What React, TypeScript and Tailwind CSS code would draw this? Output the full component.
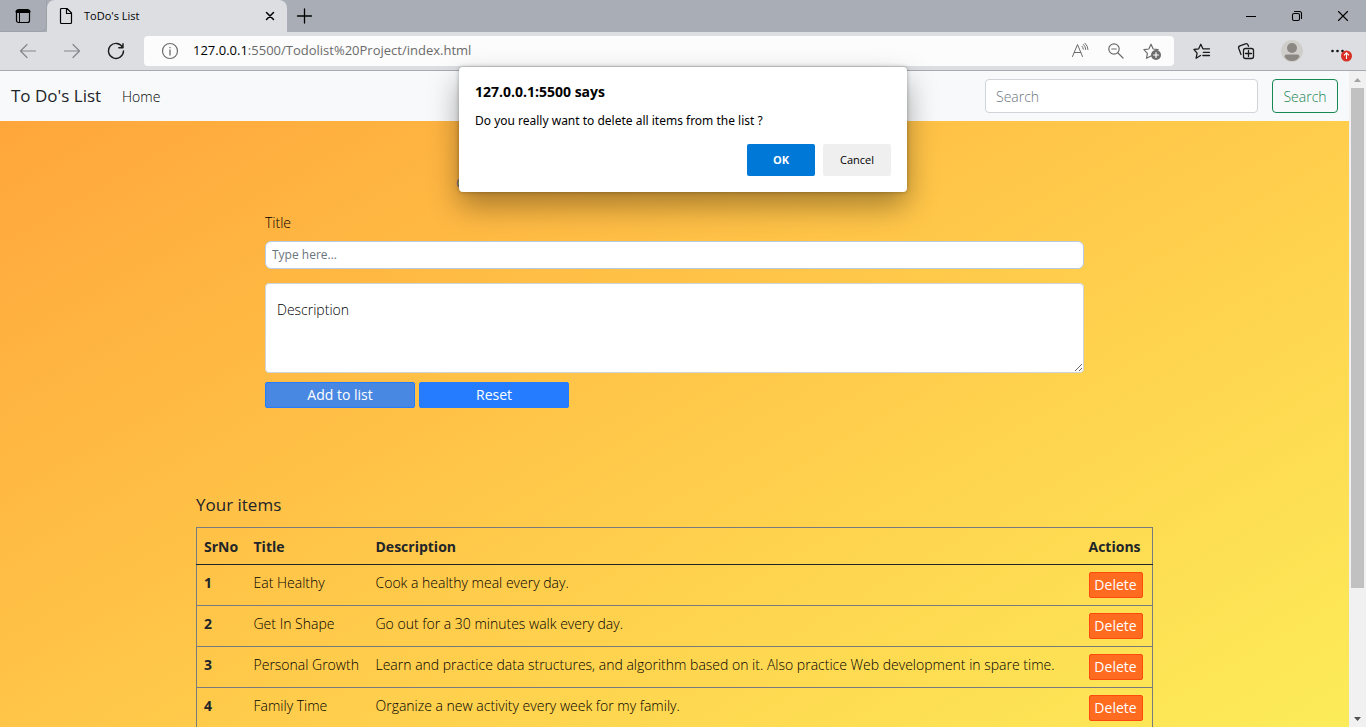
import type { ReactNode } from "react";

const items = [
  { title: "Eat Healthy", description: "Cook a healthy meal every day." },
  { title: "Get In Shape", description: "Go out for a 30 minutes walk every day." },
  {
    title: "Personal Growth",
    description:
      "Learn and practice data structures, and algorithm based on it. Also practice Web development in spare time.",
  },
  { title: "Family Time", description: "Organize a new activity every week for my family." },
];

function Icon({ children, className = "" }: { children: ReactNode; className?: string }) {
  return (
    <svg
      width="18"
      height="18"
      viewBox="0 0 18 18"
      fill="none"
      stroke="currentColor"
      strokeWidth="1.2"
      strokeLinecap="round"
      strokeLinejoin="round"
      aria-hidden="true"
      className={className}
    >
      {children}
    </svg>
  );
}

function IconButton({ label, className = "", children }: { label: string; className?: string; children: ReactNode }) {
  return (
    <button type="button" aria-label={label} className={`flex h-full shrink-0 items-center justify-center ${className}`}>
      {children}
    </button>
  );
}

function TitleBar() {
  return (
    <div className="flex h-8 shrink-0 bg-[#a9aeb6] text-black">
      <IconButton label="Tab actions" className="w-[47px] rounded-br-md border-r border-b border-[#9da2aa]">
        <Icon>
          <rect x="2.5" y="2.5" width="13" height="13" rx="2" />
          <path d="M3 4.5h12" strokeWidth="3" />
          <path d="M5.500 6v9" strokeWidth="1" />
        </Icon>
      </IconButton>
      <div className="flex w-60 items-center rounded-t-lg bg-[#dddee2] pl-[10px]">
        <Icon>
          <path d="M3.500 2.500v13a1 1 0 0 0 1 1h9a1 1 0 0 0 1-1V6L10 1.500H4.500a1 1 0 0 0-1 1zM9.500 1.500v5h5" />
        </Icon>
        <span className="ml-[9px] flex-1 text-[11px]">ToDo's List</span>
        <IconButton label="Close tab" className="w-[34px]">
          <Icon>
            <path d="M5.500 5.500l7 7M12.500 5.500l-7 7" strokeWidth="1.500" />
          </Icon>
        </IconButton>
      </div>
      <IconButton label="New tab" className="w-[34px]">
        <Icon>
          <path d="M9.500 2v14M2.500 9h14" strokeWidth="1.300" />
        </Icon>
      </IconButton>
      <div className="flex-1" />
      <IconButton label="Minimize" className="w-[46px]">
        <Icon>
          <path d="M4 9.500h10" strokeWidth="1" strokeLinecap="butt" />
        </Icon>
      </IconButton>
      <IconButton label="Restore" className="w-[46px]">
        <Icon>
          <rect x="4.500" y="6.500" width="7" height="7" rx="1.500" strokeWidth="1.100" />
          <path d="M6.500 4.500h5a2 2 0 0 1 2 2v5" strokeWidth="1.100" />
        </Icon>
      </IconButton>
      <IconButton label="Close" className="w-[46px]">
        <Icon>
          <path d="M4.500 4.500l9 9M13.500 4.500l-9 9" strokeWidth="1.100" />
        </Icon>
      </IconButton>
    </div>
  );
}

function Toolbar() {
  return (
    <div className="flex h-[39px] shrink-0 items-center border-b border-[#aaa8b0] bg-[#dddee2] pl-[6px] text-[#1b1b1b]">
      <IconButton label="Back" className="w-11 text-[#85868a]">
        <Icon>
          <path d="M16.500 9H1.500M8 2.500L1.500 9l6.500 6.500" />
        </Icon>
      </IconButton>
      <IconButton label="Forward" className="w-11 text-[#85868a]">
        <Icon>
          <path d="M1.500 9h15M10 2.500L16.500 9 10 15.500" />
        </Icon>
      </IconButton>
      <IconButton label="Refresh" className="w-11">
        <Icon>
          <path d="M15.700 5.500A7.500 7.500 0 1 0 16.500 9M16 1.700v4.100h-4.200" strokeWidth="1.400" />
        </Icon>
      </IconButton>
      <div className="ml-[6px] flex h-[30px] flex-1 items-center rounded bg-[#fcfcfc] pr-1 text-[#6b6b6b]">
        <IconButton label="Site information" className="ml-[17px]">
          <Icon>
            <circle cx="9" cy="9" r="7.500" />
            <path d="M9 8v5M9 5.300v.4" strokeWidth="1.300" />
          </Icon>
        </IconButton>
        <div className="ml-[14px] flex-1 text-[13px]">
          <span className="text-black">127.0.0.1</span>:5500/Todolist%20Project/index.html
        </div>
        <IconButton label="Read aloud" className="w-9">
          <Icon>
            <path
              d="M1.500 14.500L6.500 2.500l5 12M3.300 10.500h6.400M11 4.200q1.300 1.300 1.300 3M12.500 2.500q2.200 2 2.200 5M14 1.200q3 2.800 3 6.300"
              strokeWidth="1"
            />
          </Icon>
        </IconButton>
        <IconButton label="Zoom" className="w-9">
          <Icon>
            <circle cx="7" cy="7" r="5.200" />
            <path d="M11 11l5 5M4.800 7h4.400" />
          </Icon>
        </IconButton>
        <IconButton label="Add to favorites" className="w-9">
          <Icon>
            <path d="M8 14l-4.500 2.300.9-5L.9 7.700l4.900-.7L8 2.200 10.200 7l4.900.7" />
            <circle cx="13" cy="13" r="5" fill="currentColor" stroke="none" />
            <path d="M13 10.500v5M10.500 13h5" stroke="#fff" />
          </Icon>
        </IconButton>
      </div>
      <IconButton label="Favorites" className="ml-[6px] w-11">
        <Icon>
          <path
            d="M7.500 13.500l-4.400 2.700 1-5.100L1 7.500l4.700-.7L7.800 2.300l2.100 4.500h6.600M10.300 10.300h6.200M9.800 13.500h6.700"
            strokeWidth="1.300"
          />
        </Icon>
      </IconButton>
      <IconButton label="Collections" className="w-11">
        <Icon>
          <rect x="6.500" y="6.500" width="10" height="10" rx="2" strokeWidth="1.300" />
          <path
            d="M11.500 8.500v6M8.500 11.500h6M4 12.500L1.700 6.300a2 2 0 0 1 1.200-2.500l5.600-2a2 2 0 0 1 2.500 1.200l.5 1.300"
            strokeWidth="1.300"
          />
        </Icon>
      </IconButton>
      <IconButton label="Profile" className="w-12">
        <svg width="22" height="22" viewBox="0 0 22 22" aria-hidden="true">
          <circle cx="11" cy="11" r="11" fill="#d0cecb" />
          <circle cx="11" cy="8" r="5" fill="#8b8783" />
          <path d="M3.500 16.800q0-2.300 2.300-2.300h10.400q2.300 0 2.300 2.300Q16 21 11 21T3.500 16.800z" fill="#8b8783" />
        </svg>
      </IconButton>
      <IconButton label="Settings and more, update available" className="w-[50px]">
        <svg width="22" height="22" viewBox="0 0 22 22" aria-hidden="true">
          <g fill="#111">
            <circle cx="2.500" cy="11" r="1.300" />
            <circle cx="7.500" cy="11" r="1.300" />
            <circle cx="12.500" cy="11" r="1.300" />
          </g>
          <circle cx="16.500" cy="16" r="5.500" fill="#d93025" />
          <path d="M16.500 19v-6M14 15.300l2.500-2.500 2.500 2.500" fill="none" stroke="#fff" strokeWidth="1.100" />
        </svg>
      </IconButton>
    </div>
  );
}

function Navbar() {
  return (
    <nav className="flex h-[50px] shrink-0 items-center bg-[#f8f9fa] px-[11px] text-[14px] text-[#212529]">
      <a href="#" className="w-[111px] text-[17px] whitespace-nowrap">
        To Do's List
      </a>
      <a href="#" className="flex-1 pt-px font-[350] text-black">
        Home
      </a>
      <form className="flex gap-[14px]">
        <input
          type="search"
          aria-label="Search"
          placeholder="Search"
          className="h-[34px] w-[273px] rounded border border-[#ced4da] bg-white px-[10px] font-[350] placeholder:text-[#6c757d]"
        />
        <button type="button" className="h-[34px] w-[66px] rounded border border-[#198754] font-[350] text-[#198754]">
          Search
        </button>
      </form>
    </nav>
  );
}

function TodoForm() {
  return (
    <section className="mx-auto w-full max-w-[819px] pt-[52px] text-[14px] leading-5">
      <p className="h-5 pl-[191px] text-[#6c757d]">C</p>
      <form className="pt-5">
        <label htmlFor="title" className="block font-[350] text-black">
          Title
        </label>
        <input
          id="title"
          type="text"
          placeholder="Type here..."
          className="mt-2 block h-7 w-full rounded-md border border-[#b8cbe4] bg-white px-[6px] pb-[2px] text-[12px] placeholder:text-[#6c757d]"
        />
        <textarea
          aria-label="Description"
          placeholder="Description"
          className="mt-[14px] block h-[90px] w-full resize rounded border border-[#ced4da] bg-white px-[11px] pt-4 font-[350] placeholder:text-black"
        />
        <div className="mt-[9px] flex gap-1 text-white">
          <button type="button" className="h-[26px] w-[150px] rounded-xs border border-[#257cff] bg-[#4988e2]">
            Add to list
          </button>
          <button type="button" className="h-[26px] w-[150px] rounded-xs border border-[#257cff] bg-[#257cff]">
            Reset
          </button>
        </div>
      </form>
    </section>
  );
}

function ItemsTable() {
  return (
    <section className="mx-auto w-full max-w-[957px] pt-[85px]">
      <h2 className="h-[34px] text-[17px] leading-6 font-medium">Your items</h2>
      <table className="w-full table-fixed border-collapse border border-[#777b80] text-left text-[14px] leading-5">
        <thead>
          <tr className="h-[37px] border-b border-[#212529]">
            <th className="w-[50px] pt-[2px] pl-[7px]">SrNo</th>
            <th className="w-[122px] pt-[2px] pl-[7px]">Title</th>
            <th className="pt-[2px] pl-[7px]">Description</th>
            <th className="w-[72px] pt-[2px] pl-2">Actions</th>
          </tr>
        </thead>
        <tbody>
          {items.map((item, index) => (
            <tr key={item.title} className="h-[41px] border-b border-[#777b80]">
              <th scope="row" className="pb-1 pl-[7px]">
                {index + 1}
              </th>
              <td className="pb-1 pl-[7px] font-light whitespace-nowrap text-black">{item.title}</td>
              <td className="pb-1 pl-[7px] font-light whitespace-nowrap text-black">{item.description}</td>
              <td className="pl-2">
                <button
                  type="button"
                  className="block h-[26px] w-[54px] rounded-xs border border-[#ff4a0d] bg-[#ff6c1f] text-white"
                >
                  Delete
                </button>
              </td>
            </tr>
          ))}
        </tbody>
      </table>
    </section>
  );
}

function Scrollbar() {
  return (
    <div className="flex w-[17px] shrink-0 flex-col items-center bg-[#f1f1f1]">
      <svg width="17" height="17" viewBox="0 0 17 17" aria-hidden="true">
        <path d="M5 11l3.500-4 3.500 4z" fill="#a3a3a3" />
      </svg>
      <div className="w-[13px] flex-[500] bg-[#c1c1c1]" />
      <div className="flex-[122]" />
      <svg width="17" height="17" viewBox="0 0 17 17" aria-hidden="true">
        <path d="M5 7l3.500 4L12 7z" fill="#505050" />
      </svg>
    </div>
  );
}

function ConfirmDialog() {
  return (
    <div
      role="dialog"
      aria-labelledby="dialog-title"
      className="absolute top-[67px] left-1/2 w-[448px] -translate-x-1/2 rounded bg-white p-4 text-black shadow-[0_0_4px_rgba(0,0,0,0.3),0_14px_30px_rgba(0,0,0,0.35)]"
    >
      <h1 id="dialog-title" className="text-[14px] leading-[18px] font-bold">
        127.0.0.1:5500 says
      </h1>
      <p className="mt-[11px] font-['Noto_Sans',sans-serif] text-[12px] leading-[18px]">
        Do you really want to delete all items from the list ?
      </p>
      <div className="mt-[14px] flex justify-end gap-2 text-[11px]">
        <button type="button" className="h-8 w-[68px] rounded-xs bg-[#0078d7] font-bold text-white">
          OK
        </button>
        <button type="button" className="h-8 w-[68px] rounded-xs bg-[#efefef] font-medium">
          Cancel
        </button>
      </div>
    </div>
  );
}

export default function App() {
  return (
    <div className="relative flex h-screen flex-col overflow-hidden font-['Open_Sans','Noto_Sans',sans-serif] text-[#212529]">
      <TitleBar />
      <Toolbar />
      <div className="flex min-h-0 flex-1">
        <div className="flex min-w-0 flex-1 flex-col">
          <Navbar />
          <main className="min-h-0 flex-1 overflow-hidden bg-linear-150 from-[#ffa63b] to-[#fcec59]">
            <TodoForm />
            <ItemsTable />
          </main>
        </div>
        <Scrollbar />
      </div>
      <ConfirmDialog />
    </div>
  );
}
